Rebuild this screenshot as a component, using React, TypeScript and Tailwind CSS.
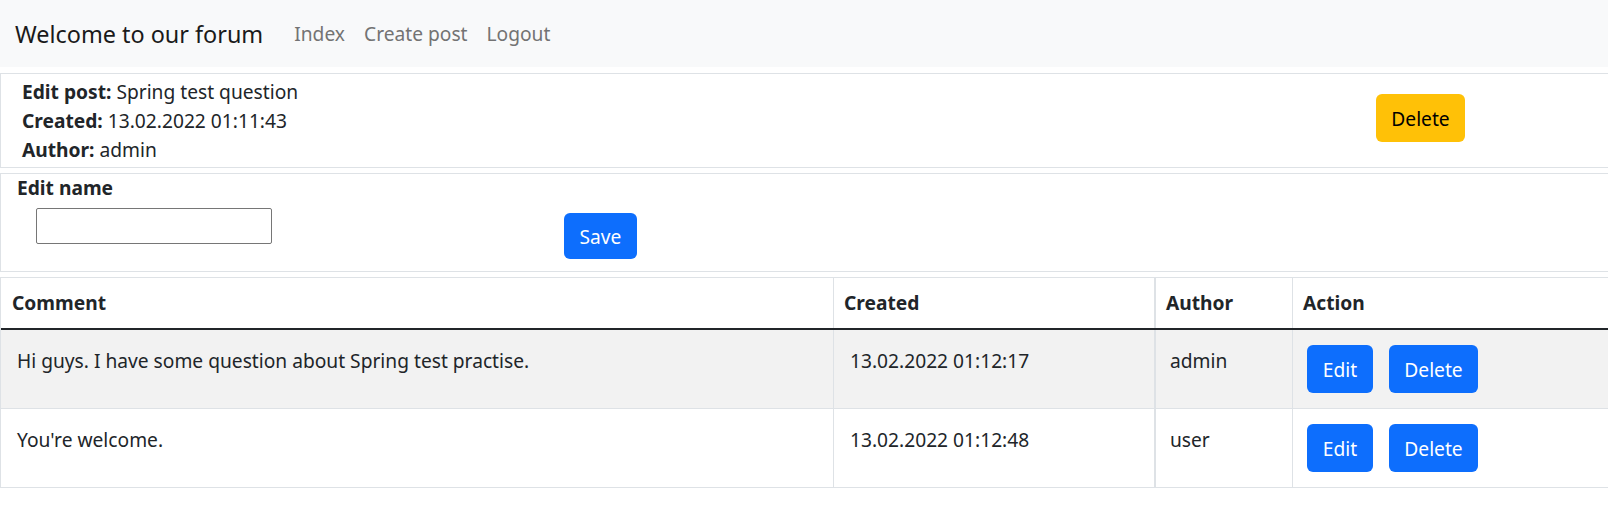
const comments = [
  { text: "Hi guys. I have some question about Spring test practise.", created: "13.02.2022 01:12:17", author: "admin" },
  { text: "You're welcome.", created: "13.02.2022 01:12:48", author: "user" },
];

function BlueButton({ label, width }: { label: string; width: string }) {
  return (
    <button className={`h-[48px] ${width} rounded-[6px] bg-[#0d6efd] pt-[2px] text-white`}>{label}</button>
  );
}

export default function App() {
  return (
    <div className="min-h-[515px] bg-white text-[19.2px] leading-[28.8px] text-[#212529] [font-family:'Noto_Sans',sans-serif]">
      <nav className="flex h-[67px] items-center bg-[#f8f9fa] pl-[15px] pt-[2px]">
        <span className="text-[23.4px] text-[#1a1a1a]">Welcome to our forum</span>
        <ul className="ml-[31px] flex gap-[19px] text-[#737373]">
          <li>Index</li>
          <li>Create post</li>
          <li>Logout</li>
        </ul>
      </nav>

      <div className="mt-[6px] flex h-[95px] border border-r-0 border-[#dee2e6] pl-[21px] pt-[4px]">
        <div>
          <div>
            <b>Edit post:</b> Spring test question
          </div>
          <div>
            <b>Created:</b> 13.02.2022 01:11:43
          </div>
          <div>
            <b>Author:</b> admin
          </div>
        </div>
        <button className="ml-auto mr-[143px] mt-[16px] h-[48px] w-[89px] rounded-[6px] bg-[#ffc107] pt-[2px] text-black">
          Delete
        </button>
      </div>

      <div className="mt-[5px] h-[99px] border border-r-0 border-[#dee2e6] pl-[16px]">
        <div className="font-bold">Edit name</div>
        <div className="flex items-start">
          <input className="ml-[19px] mt-[5px] h-[36px] w-[236px] rounded-[2px] border border-[#767676]" />
          <button className="ml-[292px] mt-[10px] h-[46px] w-[73px] rounded-[6px] bg-[#0d6efd] pt-[3px] text-white">
            Save
          </button>
        </div>
      </div>

      <div className="mt-[5px] border-l border-t border-[#dee2e6]">
        <div className="grid h-[52px] grid-cols-[833px_322px_137px_1fr] border-b-2 border-[#212529] font-bold">
          <div className="border-r border-[#dee2e6] pl-[11px] pt-[11px]">Comment</div>
          <div className="border-r-2 border-[#dee2e6] pl-[10px] pt-[11px]">Created</div>
          <div className="border-r border-[#dee2e6] pl-[10px] pt-[11px]">Author</div>
          <div className="pl-[10px] pt-[11px]">Action</div>
        </div>
        {comments.map((c, i) => (
          <div
            key={c.created}
            className={`grid h-[79px] grid-cols-[833px_322px_137px_1fr] border-b border-[#dee2e6] ${i === 0 ? "bg-[#f2f2f2]" : "bg-white"}`}
          >
            <div className="border-r border-[#dee2e6] pl-[16px] pt-[17px]">{c.text}</div>
            <div className="border-r-2 border-[#dee2e6] pl-[16px] pt-[17px]">{c.created}</div>
            <div className="border-r border-[#dee2e6] pl-[14px] pt-[17px]">{c.author}</div>
            <div className="flex items-start gap-[16px] pl-[14px] pt-[15px]">
              <BlueButton label="Edit" width="w-[66px]" />
              <BlueButton label="Delete" width="w-[89px]" />
            </div>
          </div>
        ))}
      </div>
    </div>
  );
}
